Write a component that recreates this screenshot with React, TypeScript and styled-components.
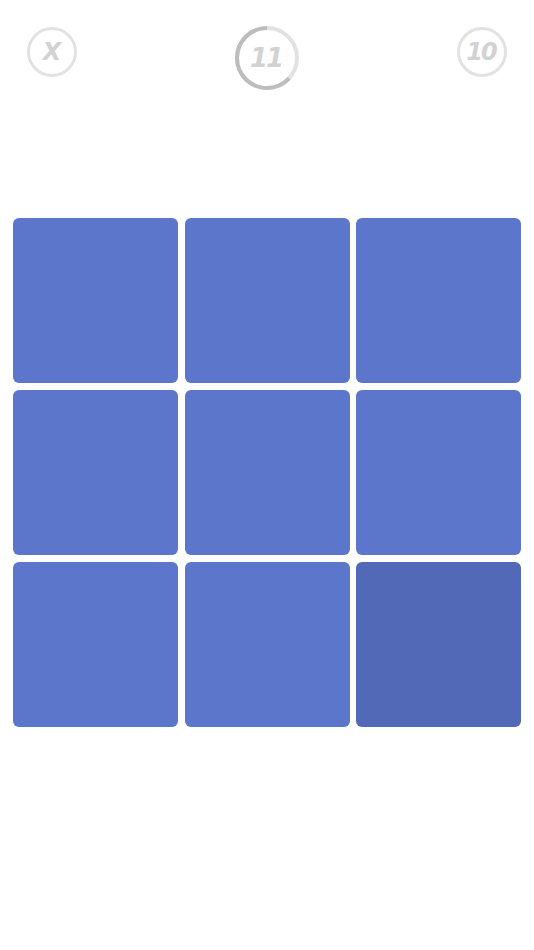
import styled, { createGlobalStyle } from 'styled-components';

const GlobalStyle = createGlobalStyle`
  html, body {
    margin: 0;
    padding: 0;
    background: #ffffff;
    font-family: "DejaVu Sans", sans-serif;
  }
`;

const Page = styled.div`
  width: 534px;
  height: 950px;
  background: #fff;
`;

const Header = styled.header`
  display: flex;
  justify-content: space-between;
  align-items: flex-start;
  padding: 26px 27px 0 27px;
  height: 64px;
`;

const Badge = styled.div<{ $size: number }>`
  position: relative;
  width: ${p => p.$size}px;
  height: ${p => p.$size}px;
  display: flex;
  align-items: center;
  justify-content: center;
  margin-top: ${p => (p.$size < 60 ? 1 : 0)}px;
`;

const Ring = styled.svg`
  position: absolute;
  inset: 0;
`;

const Label = styled.span<{ $big?: boolean }>`
  position: relative;
  font-family: "DejaVu Sans", sans-serif;
  font-style: italic;
  font-weight: bold;
  font-size: ${p => (p.$big ? 26 : 24)}px;
  color: #d2d2d2;
  letter-spacing: -2px;
  padding-right: 2px;
`;

const Board = styled.div`
  display: grid;
  grid-template-columns: repeat(3, 165px);
  grid-auto-rows: 165px;
  gap: 7px 6.5px;
  padding: 0 13px;
  margin-top: 128px;
`;

const Cell = styled.div<{ $dark?: boolean }>`
  background: ${p => (p.$dark ? '#5169b7' : '#5c76cb')};
  border-radius: 6px;
`;

const SimpleRing = ({ size }: { size: number }) => {
  const r = size / 2 - 1.5;
  return (
    <Ring width={size} height={size} viewBox={`0 0 ${size} ${size}`}>
      <circle cx={size / 2} cy={size / 2} r={r} fill="none" stroke="#e2e2e2" strokeWidth="3" />
    </Ring>
  );
};

const ProgressRing = ({ size, progress }: { size: number; progress: number }) => {
  const r = size / 2 - 2;
  const c = 2 * Math.PI * r;
  return (
    <Ring width={size} height={size} viewBox={`0 0 ${size} ${size}`}>
      <circle cx={size / 2} cy={size / 2} r={r} fill="none" stroke="#e2e2e2" strokeWidth="4" />
      <circle
        cx={size / 2}
        cy={size / 2}
        r={r}
        fill="none"
        stroke="#bdbdbd"
        strokeWidth="4"
        strokeDasharray={`${c * progress} ${c}`}
        transform={`rotate(-90 ${size / 2} ${size / 2}) scale(1 -1) translate(0 ${-size})`}
      />
    </Ring>
  );
};

const App = () => {
  const cells = [0, 1, 2, 3, 4, 5, 6, 7, 8];
  return (
    <Page>
      <GlobalStyle />
      <Header>
        <Badge $size={50}>
          <SimpleRing size={50} />
          <Label>X</Label>
        </Badge>
        <Badge $size={64}>
          <ProgressRing size={64} progress={0.63} />
          <Label $big>11</Label>
        </Badge>
        <Badge $size={50}>
          <SimpleRing size={50} />
          <Label>10</Label>
        </Badge>
      </Header>
      <Board>
        {cells.map(i => (
          <Cell key={i} $dark={i === 8} />
        ))}
      </Board>
    </Page>
  );
};

export default App;
